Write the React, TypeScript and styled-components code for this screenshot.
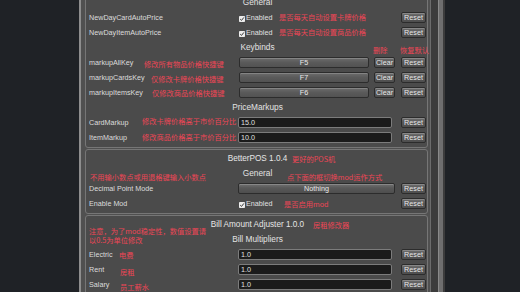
import React from "react";
import styled, { createGlobalStyle } from "styled-components";

const Global = createGlobalStyle`
  html, body { margin: 0; padding: 0; }
  body {
    width: 520px;
    height: 292px;
    overflow: hidden;
    background: #1f2226;
    font-family: "Liberation Sans", Arial, sans-serif;
  }
`;

const Screen = styled.div`
  display: flex;
  width: 520px;
  height: 292px;
  overflow: hidden;
  background: #1f2226;
`;

const Gutter = styled.div`
  width: 79px;
  flex: none;
`;

const Window = styled.div`
  width: 366px;
  flex: none;
  display: flex;
  box-sizing: border-box;
  background: #505050;
  border-left: 2px solid #8e8e8e;
  padding-left: 4px;
  overflow: hidden;
`;

const Sections = styled.div`
  width: 343px;
  flex: none;
  display: flex;
  flex-direction: column;
  gap: 1px;
  margin-top: -8px;
`;

const Scrollbar = styled.div`
  width: 15px;
  margin-left: 2px;
  flex: none;
  display: flex;
  box-sizing: border-box;
  border-left: 1px solid #6c6c6c;
  background: #3c3c3c;
`;

const ScrollThumb = styled.div`
  margin-left: 7px;
  width: 4px;
  background: #6e6e6e;
  border-left: 1px solid #8a8a8a;
`;

const Section = styled.div`
  box-sizing: border-box;
  border: 1px solid #767676;
  border-radius: 3px;
  background: #4b4b4b;
  padding: 2px 1px 2px 3px;
  display: flex;
  flex-direction: column;
`;

const Title = styled.div`
  position: relative;
  height: 14px;
  line-height: 14px;
  text-align: center;
  font-size: 8.2px;
  color: #e6e6e6;
  white-space: nowrap;
`;

const SubHeader = styled.div`
  position: relative;
  height: 15px;
  line-height: 15px;
  text-align: center;
  font-size: 8.3px;
  color: #e2e2e2;
  white-space: nowrap;
`;

const Row = styled.div`
  position: relative;
  display: flex;
  align-items: center;
  height: 15px;
`;

const Label = styled.div`
  width: 149px;
  flex: none;
  font-size: 7.2px;
  line-height: 15px;
  color: #dcdcdc;
  white-space: nowrap;
`;

const Control = styled.div`
  width: 157px;
  flex: none;
  display: flex;
  align-items: center;
  gap: 5px;
  height: 15px;
`;

const Note = styled.span<{ $x: number; $y?: number }>`
  position: absolute;
  left: ${(p) => p.$x}px;
  top: ${(p) => p.$y ?? 0}px;
  height: 15px;
  line-height: 15px;
  font-family: "Noto Sans CJK SC", "Liberation Sans", sans-serif;
  font-size: 7.25px;
  color: #ee4656;
  white-space: nowrap;
  pointer-events: none;
`;

const Button = styled.div<{ $w?: number }>`
  box-sizing: border-box;
  height: 11px;
  width: ${(p) => (p.$w ? `${p.$w}px` : "auto")};
  flex: ${(p) => (p.$w ? "none" : "1")};
  border: 1px solid #2c2c2c;
  border-radius: 2px;
  background: linear-gradient(#707070, #585858 45%, #4e4e4e);
  box-shadow: inset 0 1px 0 rgba(255, 255, 255, 0.18);
  font-size: 7.2px;
  line-height: 9px;
  text-align: center;
  color: #e8e8e8;
  white-space: nowrap;
`;

const ResetButton = styled(Button)`
  margin-left: 6px;
`;

const KeyField = styled(Button)`
  margin-left: 1px;
  background: linear-gradient(#6c6c6c, #5a5a5a 50%, #525252);
`;

const TextField = styled.div`
  box-sizing: border-box;
  width: 154px;
  height: 11px;
  border: 1px solid #7c7c7c;
  border-radius: 2px;
  background: #1b1b1b;
  padding-left: 2px;
  font-size: 7.2px;
  line-height: 9px;
  color: #e0e0e0;
`;

const Toggle = styled.div`
  display: flex;
  align-items: center;
  gap: 1px;
  margin-left: 1px;
  font-size: 7.2px;
  color: #e0e0e0;
`;

const Box = styled.span`
  display: block;
  width: 6px;
  height: 6px;
`;

const Check = () => (
  <Box>
    <svg width="6" height="6" viewBox="0 0 6 6">
      <rect x="0" y="0" width="6" height="6" rx="0.8" fill="#ececec" />
      <path d="M1.2 3.1 L2.5 4.4 L4.9 1.4" stroke="#3a3a3a" strokeWidth="1" fill="none" />
    </svg>
  </Box>
);

type N = { x: number; y?: number; t: string };

const Setting: React.FC<{ label: string; notes?: N[]; children: React.ReactNode; reset?: boolean }> = ({
  label,
  notes,
  children,
  reset = true,
}) => (
  <Row>
    <Label>{label}</Label>
    <Control>{children}</Control>
    {reset && <ResetButton $w={25}>Reset</ResetButton>}
    {notes?.map((n, i) => (
      <Note key={i} $x={n.x} $y={n.y}>
        {n.t}
      </Note>
    ))}
  </Row>
);

const Enabled = () => (
  <Toggle>
    <Check />
    <span>Enabled</span>
  </Toggle>
);

const KeyBind: React.FC<{ k: string }> = ({ k }) => (
  <>
    <KeyField>{k}</KeyField>
    <Button $w={21}>Clear</Button>
  </>
);

export default function App() {
  return (
    <>
      <Global />
      <Screen>
        <Gutter />
        <Window>
          <Sections>
            <Section>
              <SubHeader>General</SubHeader>
              <Setting label="NewDayCardAutoPrice" notes={[{ x: 190, t: "是否每天自动设置卡牌价格" }]}>
                <Enabled />
              </Setting>
              <Setting label="NewDayItemAutoPrice" notes={[{ x: 190, t: "是否每天自动设置商品价格" }]}>
                <Enabled />
              </Setting>
              <SubHeader>
                Keybinds
                <Note $x={284} $y={3}>删除</Note>
                <Note $x={311} $y={2.5}>恢复默认</Note>
              </SubHeader>
              <Setting label="markupAllKey" notes={[{ x: 55, y: 1.5, t: "修改所有物品价格快捷键" }]}>
                <KeyBind k="F5" />
              </Setting>
              <Setting label="markupCardsKey" notes={[{ x: 62, y: 2, t: "仅修改卡牌价格快捷键" }]}>
                <KeyBind k="F7" />
              </Setting>
              <Setting label="markupItemsKey" notes={[{ x: 63, y: 0.5, t: "仅修改商品价格快捷键" }]}>
                <KeyBind k="F6" />
              </Setting>
              <SubHeader>PriceMarkups</SubHeader>
              <Setting label="CardMarkup" notes={[{ x: 53, y: -1.5, t: "修改卡牌价格高于市价百分比" }]}>
                <TextField>15.0</TextField>
              </Setting>
              <Setting label="ItemMarkup" notes={[{ x: 53, y: 0, t: "修改商品价格高于市价百分比" }]}>
                <TextField>10.0</TextField>
              </Setting>
            </Section>

            <Section>
              <Title>
                BetterPOS 1.0.4
                <Note $x={203} $y={-0.5}>更好的POS机</Note>
              </Title>
              <SubHeader>
                General
                <Note $x={1} $y={4}>不用输小数点或用退格键输入小数点</Note>
                <Note $x={198} $y={3.5}>点下面的框切换mod运作方式</Note>
              </SubHeader>
              <Setting label="Decimal Point Mode">
                <Button>Nothing</Button>
              </Setting>
              <Setting label="Enable Mod" notes={[{ x: 195, y: 0.5, t: "是否启用mod" }]}>
                <Enabled />
              </Setting>
            </Section>

            <Section>
              <Title>
                Bill Amount Adjuster 1.0.0
                <Note $x={224} $y={0}>房租修改器</Note>
                <Note $x={0} $y={5.5}>注意，为了mod稳定性，数值设置请</Note>
                <Note $x={0} $y={15}>以0.5为单位修改</Note>
              </Title>
              <SubHeader>Bill Multipliers</SubHeader>
              <Setting label="Electric" notes={[{ x: 30, y: 1, t: "电费" }]}>
                <TextField>1.0</TextField>
              </Setting>
              <Setting label="Rent" notes={[{ x: 31, y: 3, t: "房租" }]}>
                <TextField>1.0</TextField>
              </Setting>
              <Setting label="Salary" notes={[{ x: 31, y: 3, t: "员工薪水" }]}>
                <TextField>1.0</TextField>
              </Setting>
            </Section>
          </Sections>
          <Scrollbar>
            <ScrollThumb />
          </Scrollbar>
        </Window>
      </Screen>
    </>
  );
}
